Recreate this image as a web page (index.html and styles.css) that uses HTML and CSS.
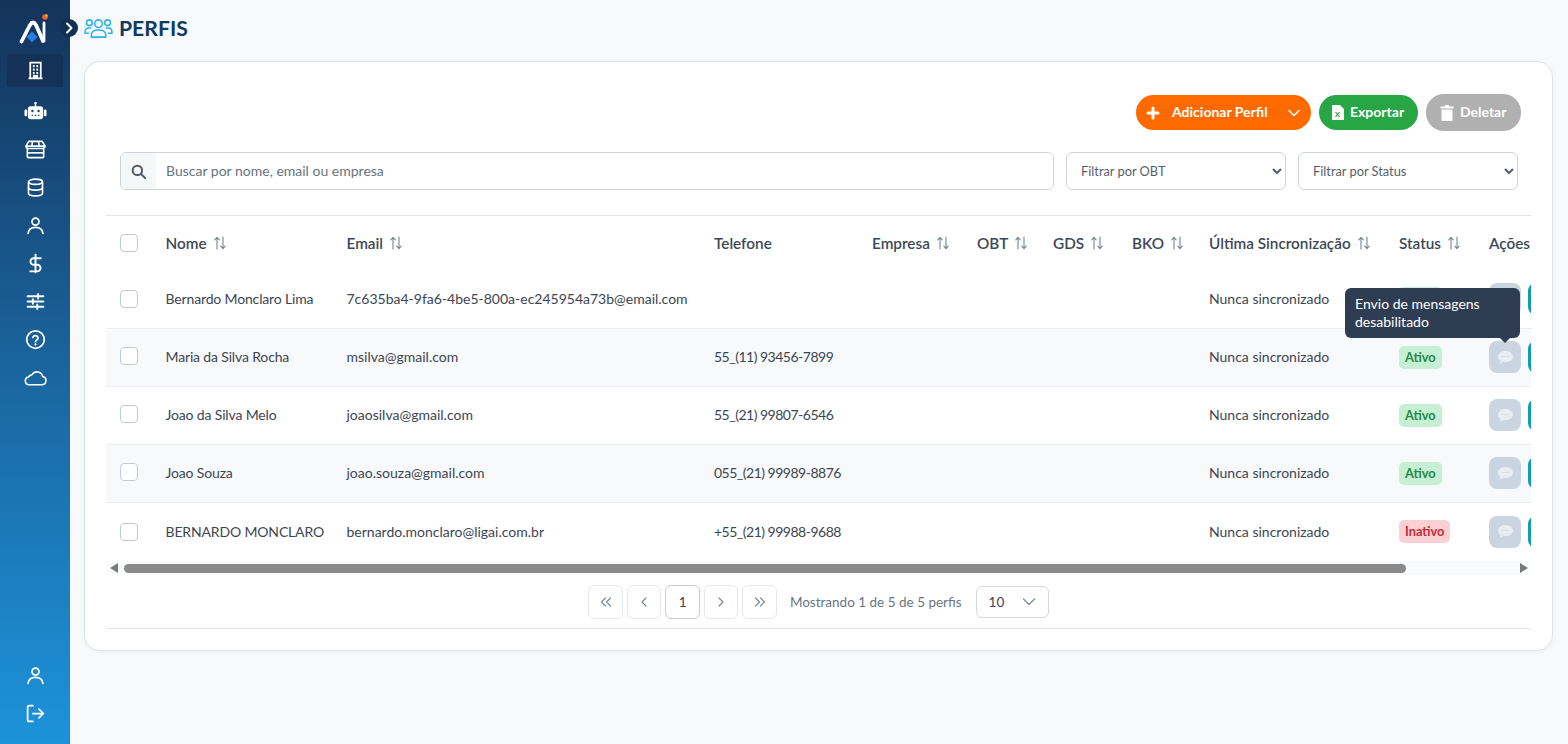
FILE: index.html
```html
<!DOCTYPE html>
<html lang="pt-BR">

<head>
    <meta charset="UTF-8">
    <meta name="viewport" content="width=device-width, initial-scale=1.0">
    <title>Perfis</title>
    <link rel="stylesheet" href="styles.css">
</head>

<body>
    <svg class="sprite">
        <symbol id="sort" viewBox="0 0 12 14">
            <path d="M3 13V1.500M.8 3.800 3 1.300l2.200 2.500M9 1v11.500M6.800 10.200 9 12.700l2.200-2.500" fill="none" stroke="#7a8490" stroke-width="1.100" stroke-linecap="round" stroke-linejoin="round"/>
        </symbol>
        <symbol id="chat" viewBox="0 0 16 14">
            <path d="M8 0c4.400 0 8 2.600 8 6s-3.600 6-8 6c-.9 0-1.700-.1-2.500-.3C4.500 12.700 3 13.700 1.500 14c.7-.8 1.200-2 1.300-3.200C1 9.700 0 8 0 6c0-3.400 3.600-6 8-6z" fill="#e8edf3"/>
            <path d="M4.800 6h.8M7.600 6h.8M10.400 6h.8" stroke="#cbd5e1" stroke-width="1.100" stroke-linecap="round"/>
        </symbol>
    </svg>

    <aside class="sidebar">
        <div class="logo">
            <svg width="32" height="34" viewBox="0 0 32 34">
                <path d="M3.500 29.500 L12 13 Q15 8 18 13 L25 29" fill="none" stroke="#fff" stroke-width="3.800" stroke-linecap="round" stroke-linejoin="round"/>
                <path d="M26 29 L26 11" fill="none" stroke="#fff" stroke-width="2.800" stroke-linecap="round"/>
                <path d="M14 19.500 L19.500 25 L14 30.500 L8.500 25 Z" fill="#2b7de0"/>
                <circle cx="27" cy="5" r="2.800" fill="#f0632a"/>
                <circle cx="28.500" cy="3.500" r="1.200" fill="#f5b32d"/>
            </svg>
        </div>
        <nav class="side-nav">
            <a class="side-item active">
                <svg class="side-icon" viewBox="0 0 24 24" fill="none" stroke="#fff" stroke-width="2"><path d="M6 21V3h12v18M4 21h16"/><path d="M9 7h2M13 7h2M9 11h2M13 11h2M9 15h2M13 15h2" stroke-width="2.400"/><path d="M10 21v-3h4v3" fill="#fff"/></svg>
            </a>
            <a class="side-item">
                <svg class="side-icon side-icon-wide" viewBox="0 0 24 24" fill="#fff"><path d="M12 2a1.300 1.300 0 0 1 .8 2.400V6.500H17a3 3 0 0 1 3 3V17a3 3 0 0 1-3 3H7a3 3 0 0 1-3-3V9.500a3 3 0 0 1 3-3h4.200V4.400A1.300 1.300 0 0 1 12 2z"/><rect x="0.500" y="10" width="2.700" height="7" rx="1.200"/><rect x="20.800" y="10" width="2.700" height="7" rx="1.200"/><circle cx="8.800" cy="11.500" r="1.300" fill="#1b4f80"/><circle cx="15.200" cy="11.500" r="1.300" fill="#1b4f80"/><path d="M8 16h1.500M11.200 16h1.600M14.500 16H16" stroke="#1b4f80" stroke-width="1.200"/></svg>
            </a>
            <a class="side-item">
                <svg class="side-icon side-icon-wide" viewBox="0 0 24 24" fill="none" stroke="#fff" stroke-width="1.700" stroke-linejoin="round"><path d="M5 3.500h14l3 5a3 3 0 0 1-2 2.500H4a3 3 0 0 1-2-2.500z"/><path d="M2 8.500h20M9 3.500l-1 5M15 3.500l1 5"/><path d="M3.500 11v8.500a1 1 0 0 0 1 1h15a1 1 0 0 0 1-1V11"/><path d="M3.500 15.500h17"/></svg>
            </a>
            <a class="side-item">
                <svg class="side-icon" viewBox="0 0 24 24" fill="none" stroke="#fff" stroke-width="1.900"><ellipse cx="12" cy="5.500" rx="8" ry="3"/><path d="M4 5.500v13c0 1.700 3.600 3 8 3s8-1.300 8-3v-13"/><path d="M4 12c0 1.700 3.600 3 8 3s8-1.300 8-3"/></svg>
            </a>
            <a class="side-item">
                <svg class="side-icon" viewBox="0 0 24 24" fill="none" stroke="#fff" stroke-width="2" stroke-linecap="round"><circle cx="12" cy="7.500" r="4"/><path d="M3.500 21c.5-4.500 4-7 8.500-7s8 2.500 8.500 7"/></svg>
            </a>
            <a class="side-item">
                <svg class="side-icon" viewBox="0 0 24 24" fill="none" stroke="#fff" stroke-width="2.200" stroke-linecap="round"><path d="M12 2v20"/><path d="M18 6H10a3.500 3.500 0 0 0 0 7.500h4a3.500 3.500 0 0 1 0 7.500H6"/></svg>
            </a>
            <a class="side-item">
                <svg class="side-icon" viewBox="0 0 24 24" fill="none" stroke="#fff" stroke-width="2.200" stroke-linecap="round"><path d="M3 6h18M3 12h18M3 18h18"/><path d="M15 3.500v5M9 9.500v5M14 15.500v5"/></svg>
            </a>
            <a class="side-item">
                <svg class="side-icon" viewBox="0 0 24 24" fill="none" stroke="#fff" stroke-width="2" stroke-linecap="round"><circle cx="12" cy="12" r="10"/><path d="M9 9.500a3 3 0 0 1 5.800 1c0 2-2.800 2.300-2.800 4"/><path d="M12 17.500v.3" stroke-width="2.400"/></svg>
            </a>
            <a class="side-item">
                <svg class="side-icon side-icon-wide" viewBox="0 0 24 24" fill="none" stroke="#fff" stroke-width="1.600" stroke-linejoin="round"><path d="M5.500 19.500a4 4 0 0 1-1-7.900 5.500 5.500 0 0 1 4-2.600A6 6 0 0 1 19.500 11a4.300 4.300 0 0 1-1 8.500z"/></svg>
            </a>
        </nav>
        <nav class="side-nav side-bottom">
            <a class="side-item">
                <svg class="side-icon" viewBox="0 0 24 24" fill="none" stroke="#fff" stroke-width="2" stroke-linecap="round"><circle cx="12" cy="7.500" r="4"/><path d="M3.500 21c.5-4.500 4-7 8.500-7s8 2.500 8.500 7"/></svg>
            </a>
            <a class="side-item">
                <svg class="side-icon" viewBox="0 0 24 24" fill="none" stroke="#fff" stroke-width="2" stroke-linecap="round" stroke-linejoin="round"><path d="M9 3H5a2 2 0 0 0-2 2v14a2 2 0 0 0 2 2h4"/><path d="M9 12h12M16 7l5 5-5 5"/></svg>
            </a>
        </nav>
    </aside>

    <button class="collapse-btn">
        <svg width="10" height="12" viewBox="0 0 10 12" fill="none" stroke="#fff" stroke-width="2" stroke-linecap="round" stroke-linejoin="round"><path d="M3 1.500 7.500 6 3 10.500"/></svg>
    </button>

    <main class="content">
        <header class="page-header">
            <svg width="29" height="23" viewBox="0 0 30 24" fill="none" stroke="#2db4e6" stroke-width="1.600" stroke-linecap="round"><circle cx="15" cy="7" r="4"/><circle cx="5.500" cy="6" r="3"/><circle cx="24.500" cy="6" r="3"/><path d="M7.500 21v-2.500c0-3 3-5 7.500-5s7.500 2 7.500 5V21z" stroke-linejoin="round"/><path d="M7 11.500H5C2.500 11.500 1 13 1 15.500V17h3.500M23 11.500h2c2.500 0 4 1.500 4 4V17h-3.500"/></svg>
            <h1>PERFIS</h1>
        </header>

        <section class="card">
            <div class="toolbar">
                <div class="btn btn-orange">
                    <svg width="14" height="14" viewBox="0 0 14 14" stroke="#fff" stroke-width="3" stroke-linecap="round"><path d="M7 2v10M2 7h10"/></svg>
                    <span class="btn-label">Adicionar Perfil</span>
                    <svg width="14" height="14" viewBox="0 0 14 14" fill="none" stroke="#fff" stroke-width="1.500" stroke-linecap="round" stroke-linejoin="round"><path d="M2 4.500 7 9.500 12 4.500"/></svg>
                </div>
                <div class="btn btn-green">
                    <svg width="12" height="15" viewBox="0 0 12 15"><path d="M1 0h7l4 4v11H0V1a1 1 0 0 1 1-1z" fill="#fff"/><path d="M3.500 7l4 5M7.500 7l-4 5" stroke="#28a645" stroke-width="1.200"/></svg>
                    <span>Exportar</span>
                </div>
                <div class="btn btn-gray">
                    <svg width="14" height="16" viewBox="0 0 14 16" fill="#fff"><rect x="0.500" y="1.500" width="13" height="2" rx="0.500"/><rect x="5" y="0" width="4" height="2"/><path d="M1.500 4.500h11V15a1 1 0 0 1-1 1h-9a1 1 0 0 1-1-1z"/></svg>
                    <span>Deletar</span>
                </div>
            </div>

            <div class="filters">
                <div class="search-box">
                    <span class="search-addon">
                        <svg width="15" height="15" viewBox="0 0 16 16" fill="none" stroke="#4d5b6c" stroke-width="2.200" stroke-linecap="round"><circle cx="6.800" cy="6.800" r="5"/><path d="M10.800 10.800 15 15"/></svg>
                    </span>
                    <input type="text" class="search-input" placeholder="Buscar por nome, email ou empresa">
                </div>
                <select class="filter-select">
                    <option>Filtrar por OBT</option>
                </select>
                <select class="filter-select">
                    <option>Filtrar por Status</option>
                </select>
            </div>

            <div class="table-wrap">
                <table>
                    <colgroup>
                        <col class="col-check"><col class="col-name"><col class="col-email"><col class="col-phone">
                        <col class="col-company"><col class="col-obt"><col class="col-gds"><col class="col-bko">
                        <col class="col-sync"><col class="col-status"><col class="col-actions">
                    </colgroup>
                    <thead>
                        <tr>
                            <th><span class="check"></span></th>
                            <th>Nome<svg class="sort"><use href="#sort"/></svg></th>
                            <th>Email<svg class="sort"><use href="#sort"/></svg></th>
                            <th>Telefone</th>
                            <th>Empresa<svg class="sort"><use href="#sort"/></svg></th>
                            <th>OBT<svg class="sort"><use href="#sort"/></svg></th>
                            <th>GDS<svg class="sort"><use href="#sort"/></svg></th>
                            <th>BKO<svg class="sort"><use href="#sort"/></svg></th>
                            <th>Última Sincronização<svg class="sort"><use href="#sort"/></svg></th>
                            <th>Status<svg class="sort"><use href="#sort"/></svg></th>
                            <th>Ações</th>
                        </tr>
                    </thead>
                    <tbody>
                        <tr>
                            <td><span class="check"></span></td>
                            <td>Bernardo Monclaro Lima</td>
                            <td>7c635ba4-9fa6-4be5-800a-ec245954a73b@email.com</td>
                            <td></td><td></td><td></td><td></td><td></td>
                            <td>Nunca sincronizado</td>
                            <td><span class="badge badge-on badge-covered"></span></td>
                            <td class="actions"><span class="action-btn"><svg class="chat"><use href="#chat"/></svg></span><span class="action-teal"></span></td>
                        </tr>
                        <tr>
                            <td><span class="check"></span></td>
                            <td>Maria da Silva Rocha</td>
                            <td>msilva@gmail.com</td>
                            <td class="phone">55_(11) 93456-7899</td>
                            <td></td><td></td><td></td><td></td>
                            <td>Nunca sincronizado</td>
                            <td><span class="badge badge-on">Ativo</span></td>
                            <td class="actions">
                                <span class="action-btn">
                                    <svg class="chat"><use href="#chat"/></svg>
                                    <span class="tooltip">Envio de mensagens desabilitado</span>
                                </span><span class="action-teal"></span>
                            </td>
                        </tr>
                        <tr>
                            <td><span class="check"></span></td>
                            <td>Joao da Silva Melo</td>
                            <td>joaosilva@gmail.com</td>
                            <td class="phone">55_(21) 99807-6546</td>
                            <td></td><td></td><td></td><td></td>
                            <td>Nunca sincronizado</td>
                            <td><span class="badge badge-on">Ativo</span></td>
                            <td class="actions"><span class="action-btn"><svg class="chat"><use href="#chat"/></svg></span><span class="action-teal"></span></td>
                        </tr>
                        <tr>
                            <td><span class="check"></span></td>
                            <td>Joao Souza</td>
                            <td>joao.souza@gmail.com</td>
                            <td class="phone">055_(21) 99989-8876</td>
                            <td></td><td></td><td></td><td></td>
                            <td>Nunca sincronizado</td>
                            <td><span class="badge badge-on">Ativo</span></td>
                            <td class="actions"><span class="action-btn"><svg class="chat"><use href="#chat"/></svg></span><span class="action-teal"></span></td>
                        </tr>
                        <tr class="last-row">
                            <td><span class="check"></span></td>
                            <td>BERNARDO MONCLARO</td>
                            <td>bernardo.monclaro@ligai.com.br</td>
                            <td class="phone">+55_(21) 99988-9688</td>
                            <td></td><td></td><td></td><td></td>
                            <td>Nunca sincronizado</td>
                            <td><span class="badge badge-off">Inativo</span></td>
                            <td class="actions"><span class="action-btn"><svg class="chat"><use href="#chat"/></svg></span><span class="action-teal"></span></td>
                        </tr>
                    </tbody>
                </table>
            </div>

            <div class="scrollbar">
                <svg width="8" height="10" viewBox="0 0 8 10" fill="#7a7a7a"><path d="M8 0v10L0 5z"/></svg>
                <div class="scroll-track"><div class="scroll-thumb"></div></div>
                <svg width="8" height="10" viewBox="0 0 8 10" fill="#7a7a7a"><path d="M0 0v10l8-5z"/></svg>
            </div>

            <div class="pagination">
                <span class="page-btn"><svg class="page-icon" viewBox="0 0 12 12"><path d="M5.500 2 1.500 6l4 4M10.500 2l-4 4 4 4"/></svg></span>
                <span class="page-btn"><svg class="page-icon" viewBox="0 0 12 12"><path d="M8 2 4 6l4 4"/></svg></span>
                <span class="page-btn current">1</span>
                <span class="page-btn"><svg class="page-icon" viewBox="0 0 12 12"><path d="m4 2 4 4-4 4"/></svg></span>
                <span class="page-btn"><svg class="page-icon" viewBox="0 0 12 12"><path d="m1.500 2 4 4-4 4M6.500 2l4 4-4 4"/></svg></span>
                <span class="page-info">Mostrando 1 de 5 de 5 perfis</span>
                <div class="page-size">
                    <span>10</span>
                    <svg width="14" height="14" viewBox="0 0 14 14" fill="none" stroke="#7d8794" stroke-width="1.200" stroke-linecap="round" stroke-linejoin="round"><path d="M1.500 4 7 9.500 12.500 4"/></svg>
                </div>
            </div>
        </section>
    </main>
</body>

</html>
```

FILE: styles.css
```css
* {
    box-sizing: border-box;
}

html,
body {
    height: 100%;
}

body {
    margin: 0;
    display: flex;
    overflow: hidden;
    font-family: "Lato", "Noto Sans", Arial, sans-serif;
    font-size: 14px;
    background-color: #f7f9fb;
    color: #3b4654;
}

.sprite {
    display: none;
}

/* sidebar */
.sidebar {
    width: 70px;
    flex-shrink: 0;
    height: 744px;
    display: flex;
    flex-direction: column;
    background: linear-gradient(180deg, #13335a 0%, #1b6aa5 55%, #1c93da 100%);
}

.logo {
    height: 54px;
    padding: 12px 0 0 18px;
}

.side-nav {
    display: flex;
    flex-direction: column;
    align-items: center;
}

.side-item {
    width: 56px;
    height: 38px;
    display: flex;
    align-items: center;
    justify-content: center;
}

.side-item.active {
    height: 33px;
    margin-bottom: 5px;
    background-color: #143257;
    border-radius: 2px;
}

.side-icon {
    width: 21px;
    height: 21px;
}

.side-icon-wide {
    width: 23px;
    height: 23px;
}

.side-bottom {
    margin-top: auto;
    padding-bottom: 12px;
}

.collapse-btn {
    position: absolute;
    left: 60px;
    top: 19px;
    width: 18px;
    height: 18px;
    padding: 0;
    border: none;
    border-radius: 50%;
    background-color: #12304f;
    display: flex;
    align-items: center;
    justify-content: center;
}

/* main area */
.content {
    flex: 1;
    min-width: 0;
    padding: 0 15px 0 14px;
}

.page-header {
    height: 61px;
    padding-bottom: 5px;
    display: flex;
    align-items: center;
    gap: 6px;
}

.page-header h1 {
    margin: 0;
    font-size: 21.2px;
    font-weight: 700;
    color: #0f3a63;
}

.card {
    height: 590px;
    padding: 32px 21px 0;
    background-color: #fff;
    border: 1px solid #dfe4ea;
    border-radius: 16px;
    box-shadow: 0 1px 4px rgba(0, 0, 0, 0.05);
}

.toolbar {
    display: flex;
    justify-content: flex-end;
    align-items: center;
    gap: 8px;
    padding-right: 10px;
    height: 37px;
}

.btn {
    height: 35px;
    border-radius: 18px;
    display: flex;
    align-items: center;
    color: #fff;
    font-weight: 700;
    font-size: 14px;
}

.btn span {
    padding-bottom: 2px;
}

.btn-orange {
    width: 175px;
    padding: 0 10px;
    background-color: #ff6a00;
}

.btn-orange .btn-label {
    flex: 1;
    padding-left: 12px;
}

.btn-green {
    width: 99px;
    gap: 6px;
    padding-left: 13px;
    background-color: #28a645;
}

.btn-gray {
    width: 95px;
    height: 37px;
    gap: 6px;
    padding-left: 14px;
    background-color: #b0b0b0;
}

.filters {
    display: flex;
    gap: 12px;
    margin: 21px 0 25px 14px;
    padding-right: 13px;
    height: 38px;
}

.search-box {
    flex: 1;
    display: flex;
    border: 1px solid #ced4da;
    border-radius: 6px;
    overflow: hidden;
}

.search-addon {
    width: 35px;
    display: flex;
    align-items: center;
    justify-content: center;
    background-color: #f5f7f9;
}

.search-input {
    flex: 1;
    border: none;
    outline: none;
    padding: 0 11px 2px 10px;
    font-family: inherit;
    font-size: 14px;
}

.search-input::placeholder {
    color: #69737f;
}

.filter-select {
    width: 220px;
    padding: 0 10px;
    border: 1px solid #ced4da;
    border-radius: 6px;
    background-color: #fff;
    font-family: inherit;
    font-size: 12.8px;
    color: #56606c;
}

/* table */
.table-wrap {
    overflow: hidden;
    border-top: 1px solid #e3e6ea;
}

table {
    width: 1544px;
    table-layout: fixed;
    border-collapse: collapse;
}

.col-check { width: 45.5px; }
.col-name { width: 181px; }
.col-email { width: 367.5px; }
.col-phone { width: 158px; }
.col-company { width: 105px; }
.col-obt { width: 76px; }
.col-gds { width: 79px; }
.col-bko { width: 77px; }
.col-sync { width: 190px; }
.col-status { width: 90px; }
.col-actions { width: 175px; }

th,
td {
    padding: 0 0 0 14px;
    text-align: left;
    white-space: nowrap;
}

th {
    height: 54px;
    font-size: 15.3px;
    font-weight: 600;
    color: #3d4856;
}

td {
    height: 58px;
    border-top: 1px solid #eceef1;
}

/* name column runs a bit wide in this font */
td:nth-child(2) {
    letter-spacing: -0.15px;
}

tbody tr:first-child td {
    border-top: none;
}

tbody tr:nth-child(n+2):not(.last-row) td:nth-child(-n+9) {
    padding-bottom: 2px;
}

tbody tr:nth-child(even) {
    background-color: #f8f9fa;
}

tbody .last-row td {
    height: 59px;
}

.phone {
    letter-spacing: -0.5px;
}

.sort {
    width: 12px;
    height: 14px;
    margin-left: 7px;
    vertical-align: -1px;
}

.check {
    display: block;
    width: 18px;
    height: 18px;
    background-color: #fff;
    border: 1px solid #c3cad2;
    border-radius: 4px;
}

.badge {
    display: inline-block;
    padding: 3px 6px;
    border-radius: 5px;
    font-size: 12.8px;
    line-height: 17px;
    font-weight: 700;
}

.badge-covered {
    width: 43px;
    height: 23px;
    vertical-align: middle;
}

.badge-on {
    background-color: #c7efd4;
    color: #1f8a47;
}

.badge-off {
    background-color: #fbd0d2;
    color: #c22d35;
}

.actions {
    font-size: 0;
}

.action-btn {
    position: relative;
    display: inline-flex;
    align-items: center;
    justify-content: center;
    vertical-align: middle;
    width: 32px;
    height: 32px;
    border-radius: 8px;
    background-color: #cbd5e1;
}

.action-teal {
    display: inline-block;
    vertical-align: middle;
    width: 32px;
    height: 32px;
    margin-left: 7px;
    border-radius: 8px;
    background-color: #0e9fb8;
}

.chat {
    width: 15px;
    height: 13px;
}

.tooltip {
    position: absolute;
    right: 1px;
    bottom: calc(100% + 3px);
    width: 175px;
    padding: 7px 10px;
    border-radius: 6px;
    background-color: #2f3d52;
    color: #fff;
    font-size: 14px;
    line-height: 18px;
    white-space: normal;
}

.tooltip::after {
    content: "";
    position: absolute;
    right: 10px;
    top: 100%;
    border: 5px solid transparent;
    border-bottom: none;
    border-top-color: #2f3d52;
}

/* fake horizontal scrollbar */
.scrollbar {
    height: 14px;
    display: flex;
    align-items: center;
    gap: 6px;
    padding: 0 3px 0 4px;
    background-color: #fafbfc;
}

.scroll-track {
    flex: 1;
}

.scroll-thumb {
    width: 1282px;
    height: 9px;
    border-radius: 5px;
    background-color: #8a8a8a;
}

/* pagination */
.pagination {
    height: 54px;
    display: flex;
    align-items: center;
    justify-content: center;
    gap: 4px;
    border-bottom: 1px solid #e3e6ea;
    font-size: 13.5px;
    color: #6b7582;
}

.page-btn {
    width: 34.5px;
    height: 34px;
    display: flex;
    align-items: center;
    justify-content: center;
    border: 1px solid #e5e8ec;
    border-radius: 6px;
    background-color: #fff;
}

.page-btn.current {
    border-color: #c9ced5;
    color: #3b4654;
}

.page-icon {
    width: 12px;
    height: 12px;
    fill: none;
    stroke: #79838f;
    stroke-width: 1.100;
    stroke-linecap: round;
    stroke-linejoin: round;
}

.page-info {
    margin: 0 10px 0 9px;
}

.page-size {
    width: 73px;
    height: 32px;
    padding: 0 12px;
    display: flex;
    align-items: center;
    justify-content: space-between;
    border: 1px solid #d5d9df;
    border-radius: 6px;
    color: #3b4654;
}
```
